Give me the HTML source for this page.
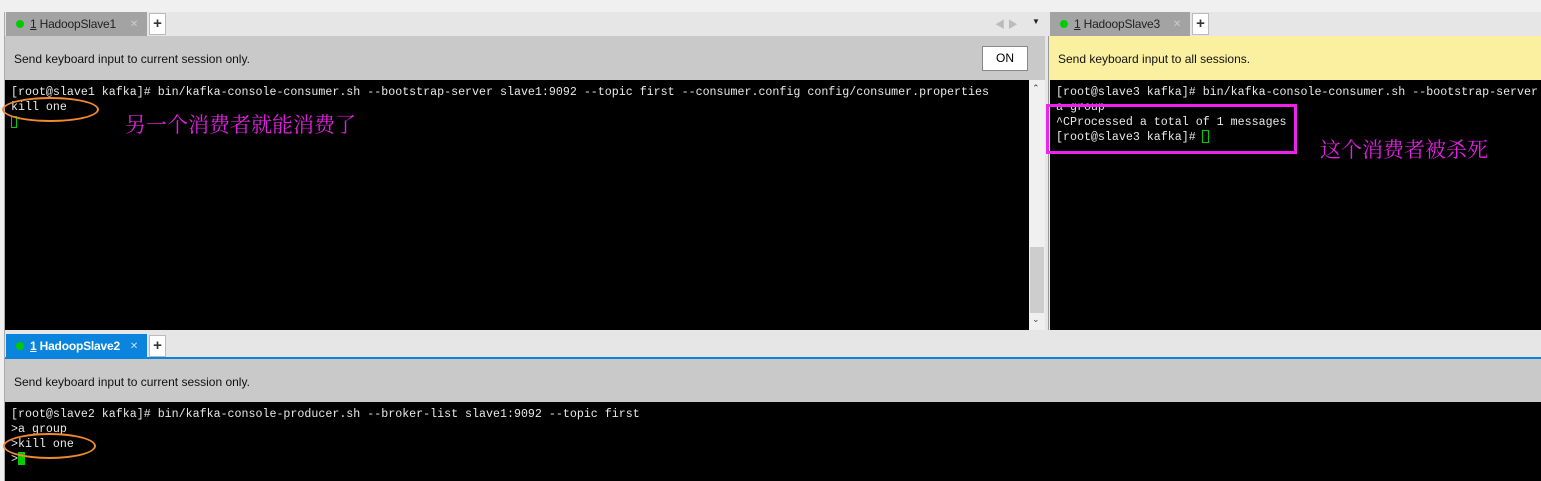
<!DOCTYPE html>
<html><head><meta charset="utf-8"><style>
*{margin:0;padding:0;box-sizing:border-box}
body{width:1541px;height:481px;background:#e6e6e6;position:relative;overflow:hidden;font-family:"Liberation Sans","Noto Sans CJK SC",sans-serif}
.a{position:absolute}
.tab{position:absolute;height:24px;font-size:12px;line-height:25px;color:#222;padding-left:24px;letter-spacing:-0.2px}
.tab .dot{position:absolute;left:10px;top:8px;width:8px;height:8px;border-radius:50%;background:#0c0}
.tab .x{position:absolute;right:9px;top:0;color:#ccc;font-size:10px}
.plus{position:absolute;width:17px;height:22px;background:#fff;border:1px solid #bbb;font-size:15px;line-height:19px;text-align:center;font-weight:bold;color:#333}
.info{position:absolute;font-size:12px;color:#111;line-height:46px;padding-left:9px}
.term{position:absolute;background:#000;color:#e8e8e8;font-family:"Liberation Mono",monospace;font-size:11.65px;line-height:15px;white-space:pre;overflow:hidden}
.cn{position:absolute;color:#e020e0;font-family:"Noto Serif CJK SC","Noto Sans CJK SC",serif;font-size:21px}
</style></head><body>
<div class="a" style="left:0;top:0;width:1541px;height:12px;background:#f0f0f0"></div>
<div class="a" style="left:0;top:12px;width:5px;height:469px;background:#f0f0f0;border-right:1px solid #aaa"></div>

<div class="tab" style="left:6px;top:12px;width:141px;background:#a3a3a3"><span class="dot"></span><u>1</u> HadoopSlave1<span class="x">✕</span></div>
<div class="plus" style="left:149px;top:13px">+</div>
<div class="a" style="left:995px;top:16px;font-size:10px;color:#bbb">◀ ▶</div>
<div class="a" style="left:1032px;top:17px;font-size:8px;color:#222">▼</div>
<div class="info" style="left:5px;top:36px;width:1040px;height:44px;background:#c9c9c9">Send keyboard input to current session only.</div>
<div class="a" style="left:982px;top:46px;width:46px;height:25px;background:#fff;border:1px solid #888;font-size:12px;text-align:center;line-height:23px">ON</div>
<div class="term" style="left:5px;top:80px;width:1024px;height:250px;padding:5px 0 0 6px">[root@slave1 kafka]# bin/kafka-console-consumer.sh --bootstrap-server slave1:9092 --topic first --consumer.config config/consumer.properties
kill one
</div>
<div class="a" style="left:11px;top:116px;width:6px;height:12px;border:1px solid #0c0"></div>
<div class="a" style="left:1029px;top:80px;width:16px;height:250px;background:#f0f0f0"></div>
<div class="a" style="left:1030px;top:247px;width:14px;height:66px;background:#cdcdcd"></div>
<div class="a" style="left:1032px;top:83px;font-size:9px;color:#444">⌃</div>
<div class="a" style="left:1032px;top:314px;font-size:9px;color:#444">⌄</div>
<div class="a" style="left:2px;top:97px;width:97px;height:25px;border:2px solid #f08a30;border-radius:50%"></div>
<div class="cn" style="left:125px;top:109px">另一个消费者就能消费了</div>

<div class="a" style="left:1045px;top:36px;width:4px;height:296px;background:#e6e6e6;border-right:1px solid #999"></div>
<div class="tab" style="left:1050px;top:12px;width:140px;background:#a3a3a3"><span class="dot"></span><u>1</u> HadoopSlave3<span class="x">✕</span></div>
<div class="plus" style="left:1192px;top:13px">+</div>
<div class="info" style="left:1049px;top:36px;width:492px;height:44px;background:#faf0a0">Send keyboard input to all sessions.</div>
<div class="term" style="left:1050px;top:80px;width:491px;height:250px;padding:5px 0 0 6px">[root@slave3 kafka]# bin/kafka-console-consumer.sh --bootstrap-server
a group
^CProcessed a total of 1 messages
[root@slave3 kafka]# </div>
<div class="a" style="left:1202px;top:130px;width:7px;height:13px;border:1px solid #0c0"></div>
<div class="a" style="left:1046px;top:104px;width:251px;height:50px;border:3px solid #ee22ee"></div>
<div class="cn" style="left:1320px;top:134px">这个消费者被杀死</div>

<div class="a" style="left:5px;top:330px;width:1536px;height:4px;background:#e6e6e6"></div>
<div class="tab" style="left:6px;top:334px;width:141px;background:#0a84dc;color:#fff;font-weight:bold"><span class="dot"></span><u>1</u> HadoopSlave2<span class="x" style="color:#cde;font-weight:normal">✕</span></div>
<div class="plus" style="left:149px;top:335px">+</div>
<div class="a" style="left:5px;top:357px;width:1536px;height:2px;background:#0a84dc"></div>
<div class="info" style="left:5px;top:359px;width:1536px;height:43px;background:#c9c9c9">Send keyboard input to current session only.</div>
<div class="term" style="left:5px;top:402px;width:1536px;height:79px;padding:5px 0 0 6px">[root@slave2 kafka]# bin/kafka-console-producer.sh --broker-list slave1:9092 --topic first
&gt;a group
&gt;kill one
&gt;</div>
<div class="a" style="left:18px;top:452px;width:7px;height:13px;background:#0c0"></div>
<div class="a" style="left:3px;top:433px;width:93px;height:26px;border:2px solid #f08a30;border-radius:50%"></div>
</body></html>
